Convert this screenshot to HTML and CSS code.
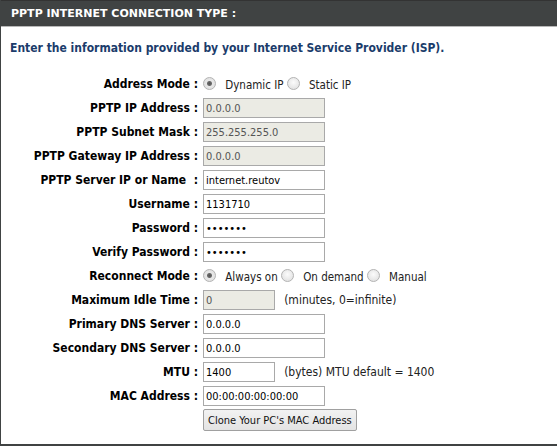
FILE: index.html
```html
<!DOCTYPE html>
<html lang="en">
<head>
    <meta charset="UTF-8">
    <title>PPTP Internet Connection Type</title>
    <link rel="stylesheet" href="styles.css">
</head>
<body>
    <div class="box">
        <h2 class="box-title">PPTP INTERNET CONNECTION TYPE :</h2>
        <p class="intro">Enter the information provided by your Internet Service Provider (ISP).</p>

        <table class="form-table">
            <tr>
                <td class="label">Address Mode :</td>
                <td>
                    <label class="radio"><input type="radio" name="addrMode" checked> Dynamic IP</label>
                    <label class="radio"><input type="radio" name="addrMode"> Static IP</label>
                </td>
            </tr>
            <tr>
                <td class="label">PPTP IP Address :</td>
                <td><input type="text" class="field" value="0.0.0.0" disabled></td>
            </tr>
            <tr>
                <td class="label">PPTP Subnet Mask :</td>
                <td><input type="text" class="field" value="255.255.255.0" disabled></td>
            </tr>
            <tr>
                <td class="label">PPTP Gateway IP Address :</td>
                <td><input type="text" class="field" value="0.0.0.0" disabled></td>
            </tr>
            <tr>
                <td class="label">PPTP Server IP or Name&nbsp; :</td>
                <td><input type="text" class="field" value="internet.reutov"></td>
            </tr>
            <tr>
                <td class="label">Username :</td>
                <td><input type="text" class="field" value="1131710"></td>
            </tr>
            <tr>
                <td class="label">Password :</td>
                <td><input type="password" class="field" value="1131710"></td>
            </tr>
            <tr>
                <td class="label">Verify Password :</td>
                <td><input type="password" class="field" value="1131710"></td>
            </tr>
            <tr>
                <td class="label">Reconnect Mode :</td>
                <td>
                    <label class="radio"><input type="radio" name="reconnect" checked> Always on</label>
                    <label class="radio"><input type="radio" name="reconnect"> On demand</label>
                    <label class="radio"><input type="radio" name="reconnect"> Manual</label>
                </td>
            </tr>
            <tr>
                <td class="label">Maximum Idle Time :</td>
                <td><input type="text" class="field short" value="0" disabled> <span class="hint">(minutes, 0=infinite)</span></td>
            </tr>
            <tr>
                <td class="label">Primary DNS Server :</td>
                <td><input type="text" class="field" value="0.0.0.0"></td>
            </tr>
            <tr>
                <td class="label">Secondary DNS Server :</td>
                <td><input type="text" class="field" value="0.0.0.0"></td>
            </tr>
            <tr>
                <td class="label">MTU :</td>
                <td><input type="text" class="field short" value="1400"> <span class="hint">(bytes) MTU default = 1400</span></td>
            </tr>
            <tr>
                <td class="label">MAC Address :</td>
                <td><input type="text" class="field" value="00:00:00:00:00:00"></td>
            </tr>
            <tr>
                <td class="label"></td>
                <td class="button-cell"><button type="button">Clone Your PC's MAC Address</button></td>
            </tr>
        </table>
    </div>
</body>
</html>
```

FILE: styles.css
```css
body {
    margin: 0;
    font-family: "DejaVu Sans Condensed", "DejaVu Sans", sans-serif;
    font-size: 11px;
    color: #000;
    background: #fff;
}

.box {
    width: 580px;
    height: 446px;
    border-left: 1px solid #404343;
    border-bottom: 2px solid #404343;
    box-sizing: border-box;
}

.box-title {
    margin: 0;
    height: 27px;
    line-height: 26px;
    padding-left: 10px;
    background-color: #404343;
    border-top: 1px solid #333;
    border-bottom: 1px solid #b8b8b8;
    box-sizing: border-box;
    color: #fff;
    font-family: "DejaVu Sans", sans-serif;
    font-size: 11px;
    font-weight: bold;
}

.intro {
    margin: 13px 0 0 9px;
    color: #1b3c6b;
    font-size: 12px;
    font-weight: bold;
    line-height: 16px;
}

.form-table {
    margin-top: 16px;
    border-collapse: collapse;
}

.form-table td {
    height: 24px;
    padding: 0;
    vertical-align: middle;
}

.form-table .label {
    width: 197px;
    padding-right: 5px;
    text-align: right;
    font-size: 12px;
    font-weight: bold;
    white-space: nowrap;
}

.radio {
    color: #222;
    font-size: 11.5px;
}

.radio input {
    appearance: none;
    width: 13px;
    height: 13px;
    margin: 0 6px 0 0;
    border: 1px solid #b4b4b4;
    border-radius: 50%;
    background: radial-gradient(circle at 50% 40%, #fbfbfb, #dcdcdc);
    vertical-align: -1px;
}

.radio input:checked {
    background: radial-gradient(circle, #555 0, #6a6a6a 2px, #e8e8e8 3px, #dcdcdc 100%);
}

.field {
    width: 122px;
    height: 20px;
    margin: 0;
    padding: 0 2px;
    border: 1px solid #a9a9a9;
    box-sizing: border-box;
    font-family: inherit;
    font-size: 11px;
    color: #000;
    background: #fff;
}

.field:disabled {
    background-color: #ebebe4;
    color: #555;
}

.field.short {
    width: 72px;
    margin-right: 6px;
}

.hint {
    color: #222;
    font-size: 12px;
}

.button-cell {
    padding-top: 6px;
}

button {
    height: 22px;
    padding: 0 4px;
    border: 1px solid #a0a0a0;
    border-radius: 2px;
    background: linear-gradient(#f2f2f2, #e3e3e3);
    font-family: inherit;
    font-size: 11px;
    color: #111;
}
```
